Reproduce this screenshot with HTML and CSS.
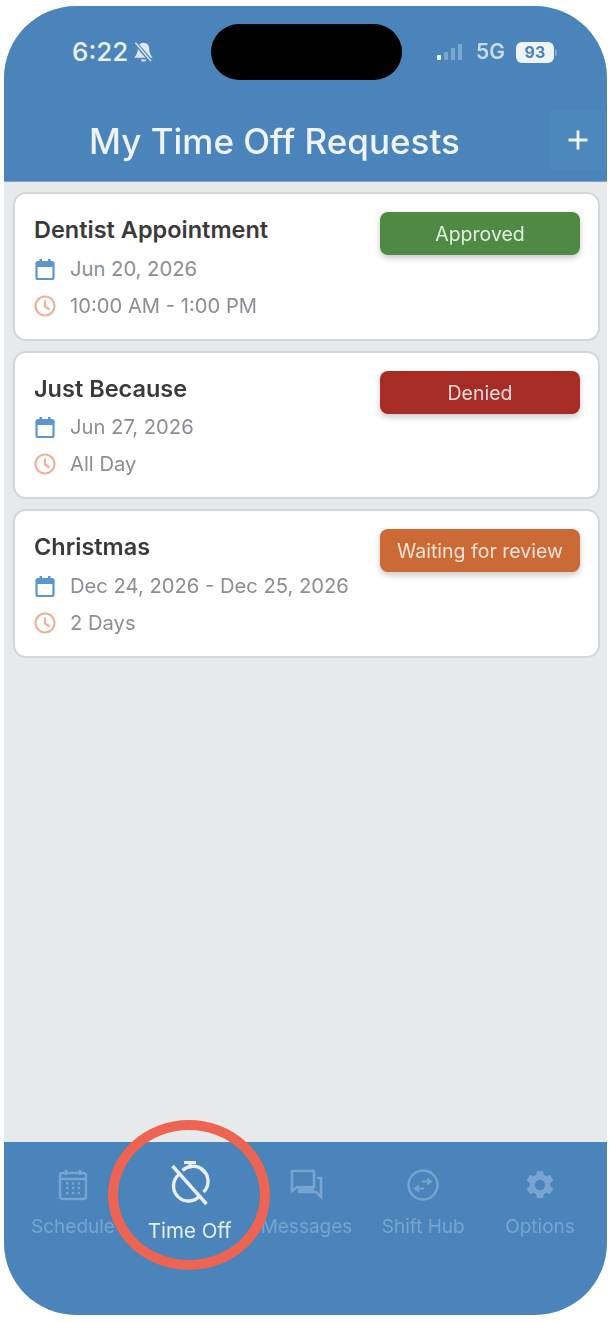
FILE: index.html
```html
<!DOCTYPE html>
<html lang="en">
<head>
<meta charset="utf-8">
<title>My Time Off Requests</title>
<link rel="stylesheet" href="styles.css">
</head>
<body>
<div class="phone">
  <header class="top">
    <div class="status">
      <div class="status-left">
        <span class="clock">6:22</span>
        <svg class="bell" viewBox="0 0 20 20" width="23" height="23"><path d="M10 1.500c-3.200 0-5 2.500-5 5.500 0 3.800-1.500 5.500-3 7.500h16c-1.500-2-3-3.700-3-7.500 0-3-1.800-5.500-5-5.500z" fill="#dfe8f2"/><path d="M7.500 16a2.600 2.600 0 0 0 5 0z" fill="#dfe8f2"/><path d="M3.500 2.500l13 15" stroke="#4a84ba" stroke-width="3.400"/><path d="M3 1.500l13.500 16" stroke="#dfe8f2" stroke-width="1.300"/></svg>
      </div>
      <div class="island"></div>
      <div class="status-right">
        <svg class="signal" viewBox="0 0 27 18" width="27" height="18"><rect x="0" y="12" width="4" height="5" rx="1" fill="#f2f6fa"/><rect x="7" y="9" width="4" height="8" rx="1" fill="#7ea7cd"/><rect x="14" y="5" width="4" height="12" rx="1" fill="#7ea7cd"/><rect x="21" y="1" width="4" height="16" rx="1" fill="#7ea7cd"/></svg>
        <span class="net">5G</span>
        <span class="battery">93</span>
        <span class="nub"></span>
      </div>
    </div>
    <div class="titlebar">
      <h1 class="title">My Time Off Requests</h1>
      <div class="add">
        <svg viewBox="0 0 24 24" width="24" height="24"><path d="M12 2.500v19M2.500 12h19" stroke="#edf3f8" stroke-width="2.800"/></svg>
      </div>
    </div>
  </header>

  <main class="list">
    <article class="card">
      <div class="card-body">
        <h2 class="name">Dentist Appointment</h2>
        <div class="row">
          <svg class="ico" viewBox="0 0 24 24" width="24" height="24"><path d="M3.500 6.500a1.500 1.500 0 0 1 1.500-1.500h14a1.500 1.500 0 0 1 1.500 1.500v14a1.500 1.500 0 0 1-1.500 1.500h-14a1.500 1.500 0 0 1-1.500-1.500z" fill="none" stroke="#5d96cb" stroke-width="2.200"/><path d="M3.500 5.500h17v4.500h-17zM6.500 2h2.500v4h-2.500zM15 2h2.500v4h-2.500z" fill="#5d96cb"/></svg>
          <span>Jun 20, 2026</span>
        </div>
        <div class="row">
          <svg class="ico" viewBox="0 0 24 24" width="24" height="24"><circle cx="12" cy="12" r="9.500" fill="none" stroke="#eeb097" stroke-width="2.200"/><path d="M12 6.500v6l4.500 3" fill="none" stroke="#eeb097" stroke-width="2.200"/></svg>
          <span>10:00 AM - 1:00 PM</span>
        </div>
      </div>
      <div class="badge approved">Approved</div>
    </article>

    <article class="card">
      <div class="card-body">
        <h2 class="name">Just Because</h2>
        <div class="row">
          <svg class="ico" viewBox="0 0 24 24" width="24" height="24"><path d="M3.500 6.500a1.500 1.500 0 0 1 1.500-1.500h14a1.500 1.500 0 0 1 1.500 1.500v14a1.500 1.500 0 0 1-1.500 1.500h-14a1.500 1.500 0 0 1-1.500-1.500z" fill="none" stroke="#5d96cb" stroke-width="2.200"/><path d="M3.500 5.500h17v4.500h-17zM6.500 2h2.500v4h-2.500zM15 2h2.500v4h-2.500z" fill="#5d96cb"/></svg>
          <span>Jun 27, 2026</span>
        </div>
        <div class="row">
          <svg class="ico" viewBox="0 0 24 24" width="24" height="24"><circle cx="12" cy="12" r="9.500" fill="none" stroke="#eeb097" stroke-width="2.200"/><path d="M12 6.500v6l4.500 3" fill="none" stroke="#eeb097" stroke-width="2.200"/></svg>
          <span>All Day</span>
        </div>
      </div>
      <div class="badge denied">Denied</div>
    </article>

    <article class="card">
      <div class="card-body">
        <h2 class="name">Christmas</h2>
        <div class="row">
          <svg class="ico" viewBox="0 0 24 24" width="24" height="24"><path d="M3.500 6.500a1.500 1.500 0 0 1 1.500-1.500h14a1.500 1.500 0 0 1 1.500 1.500v14a1.500 1.500 0 0 1-1.500 1.500h-14a1.500 1.500 0 0 1-1.500-1.500z" fill="none" stroke="#5d96cb" stroke-width="2.200"/><path d="M3.500 5.500h17v4.500h-17zM6.500 2h2.500v4h-2.500zM15 2h2.500v4h-2.500z" fill="#5d96cb"/></svg>
          <span>Dec 24, 2026 - Dec 25, 2026</span>
        </div>
        <div class="row">
          <svg class="ico" viewBox="0 0 24 24" width="24" height="24"><circle cx="12" cy="12" r="9.500" fill="none" stroke="#eeb097" stroke-width="2.200"/><path d="M12 6.500v6l4.500 3" fill="none" stroke="#eeb097" stroke-width="2.200"/></svg>
          <span>2 Days</span>
        </div>
      </div>
      <div class="badge waiting">Waiting for review</div>
    </article>
  </main>

  <nav class="tabs">
    <div class="tab">
      <svg viewBox="0 0 30 34" width="30" height="34"><rect x="2" y="5" width="26" height="26" rx="2.500" fill="none" stroke="currentColor" stroke-width="2.400"/><path d="M2 11h26" stroke="currentColor" stroke-width="2.400"/><path d="M8 2v5M22 2v5" stroke="currentColor" stroke-width="2.400"/><path d="M8 15.500h14M8 20h14M8 25h14" stroke="currentColor" stroke-width="2.500" stroke-dasharray="2.500 3.300"/></svg>
      <span>Schedule</span>
    </div>
    <div class="tab active">
      <svg viewBox="0 0 40 46" width="40" height="46"><path d="M14 2.500h12M20 2.500v6" stroke="currentColor" stroke-width="3"/><path d="M9.500 14a15 15 0 1 0 21 21M33.500 32a15 15 0 0 0-21-21.500" fill="none" stroke="currentColor" stroke-width="3.400"/><path d="M2.500 6l34 38" stroke="currentColor" stroke-width="3.400"/><path d="M31.500 9.500l3.500 3.500" stroke="currentColor" stroke-width="3"/></svg>
      <span>Time Off</span>
    </div>
    <div class="tab">
      <svg viewBox="0 0 34 34" width="34" height="34"><path d="M2 3h22v16h-17l-5 4z" fill="none" stroke="currentColor" stroke-width="2.600"/><path d="M27 10h4v19l-5-5h-18" fill="none" stroke="currentColor" stroke-width="2.600"/><path d="M8 19h16v5h-16z" fill="currentColor"/></svg>
      <span>Messages</span>
    </div>
    <div class="tab">
      <svg viewBox="0 0 34 34" width="34" height="34"><circle cx="17" cy="17" r="14.500" fill="none" stroke="currentColor" stroke-width="2.400"/><path d="M16 13.500h8M21 10.500l4 3-4 3M18 20.500h-8M13 17.500l-4 3 4 3" fill="none" stroke="currentColor" stroke-width="2"/></svg>
      <span>Shift Hub</span>
    </div>
    <div class="tab">
      <svg viewBox="0 0 32 34" width="30" height="34"><path fill-rule="evenodd" fill="currentColor" d="M12.800 2h6.400l1 4.300 2.500 1.400 4.200-1.300 3.200 5.500-3.200 3v3.200l3.200 3-3.200 5.500-4.200-1.300-2.500 1.400-1 4.300h-6.400l-1-4.300-2.500-1.400-4.200 1.300-3.200-5.500 3.200-3v-3.200l-3.200-3 3.200-5.500 4.200 1.300 2.500-1.400zM16 11.500a5.500 5.500 0 1 0 0 11 5.500 5.500 0 0 0 0-11z"/></svg>
      <span>Options</span>
    </div>
  </nav>

  <div class="ring"></div>
</div>
</body>
</html>
```

FILE: styles.css
```css
* { box-sizing: border-box; }
html, body { margin: 0; padding: 0; background: #fff; }
body {
  width: 610px;
  height: 1322px;
  padding: 6px 3px 7px 4px;
  font-family: "Inter", "Noto Sans", sans-serif;
  overflow: hidden;
}
.phone {
  position: relative;
  width: 603px;
  height: 1309px;
  border-radius: 72px;
  background: #e6eaeb;
  display: flex;
  flex-direction: column;
  overflow: hidden;
  filter: blur(0.5px);
}
.top {
  height: 176px;
  flex: none;
  background: #4a84ba;
  border-bottom: 1px solid #7fa6ca;
  color: #fff;
}
.status {
  height: 74px;
  padding: 18px 0 0;
  display: grid;
  grid-template-columns: 207px 191px 1fr;
}
.status-left {
  display: flex;
  align-items: center;
  gap: 4px;
  height: 56px;
  padding-left: 68px;
}
.clock { font: 500 26px/28px "Inter", sans-serif; color: #e9f0f6; }
.bell { flex: none; }
.island { height: 56px; background: #000; border-radius: 28px; }
.status-right {
  display: flex;
  align-items: center;
  height: 56px;
  padding-left: 35px;
}
.signal { margin-right: 12px; }
.net { font: 600 21px/20px "Inter", sans-serif; color: #c9dbeb; }
.battery {
  margin-left: 11px;
  width: 38px;
  height: 21px;
  border-radius: 6px;
  background: #eef3f8;
  color: #4a84ba;
  font: 700 16px/21px "Inter", sans-serif;
  text-align: center;
}
.nub { width: 2px; height: 7px; background: #7ea7cd; margin-left: 1px; border-radius: 0 2px 2px 0; }
.titlebar {
  height: 101px;
  display: flex;
  align-items: flex-start;
  justify-content: space-between;
}
.title {
  margin: 37px 0 0 85px;
  font: 500 35px/48px "Inter", sans-serif;
  color: #eef3f8;
  white-space: nowrap;
}
.add {
  width: 58px;
  height: 60px;
  margin-top: 30px;
  background: #4d88bd;
  border-radius: 6px 0 0 6px;
  display: flex;
  align-items: center;
  justify-content: center;
}
.list {
  flex: 1;
  padding: 10px 7px 0 9px;
  display: flex;
  flex-direction: column;
  gap: 10px;
}
.card {
  height: 148.5px;
  background: #fff;
  border: 2px solid #d3d7da;
  border-radius: 13px;
  padding: 18px 18px 0 19px;
  display: flex;
  justify-content: space-between;
  align-items: flex-start;
}
.card-body { display: flex; flex-direction: column; }
.name {
  margin: 0 0 2px;
  font: 600 23.5px/36px "Inter", sans-serif;
  color: #3a3a3c;
}
.row {
  height: 37px;
  display: flex;
  align-items: center;
  gap: 13px;
  font: 400 20.2px/30px "Inter", sans-serif;
  color: #8b8e92;
  white-space: nowrap;
}
.ico { flex: none; margin-left: -1px; }
.badge {
  width: 200px;
  height: 43px;
  border-radius: 8px;
  color: #e4ece2;
  font: 400 19.5px/44px "Inter", sans-serif;
  text-align: center;
  box-shadow: 0 3px 6px rgba(0, 0, 0, 0.22);
}
.approved { background: #4f8a45; }
.denied { background: #a62c25; color: #f1dcda; }
.waiting { background: #cb6a35; color: #f5e3d8; }
.tabs {
  height: 173px;
  flex: none;
  background: #4a84ba;
  padding: 24px 9px 0 11px;
  display: flex;
  justify-content: space-between;
}
.tab {
  width: 116px;
  height: 74px;
  display: flex;
  flex-direction: column;
  align-items: center;
  color: #77a5cf;
  font: 400 19px/24px "Inter", sans-serif;
  white-space: nowrap;
}
.tab svg { height: 34px; margin-top: 2px; margin-bottom: 13px; flex: none; }
.tab.active { color: #e6eef6; font-size: 20.5px; }
.tab.active svg { height: 46px; margin-top: -6px; margin-bottom: 13px; }
.ring {
  position: absolute;
  left: 104px;
  top: 1114px;
  width: 162px;
  height: 150px;
  border: 10px solid #ed6552;
  border-radius: 50%;
}
```
